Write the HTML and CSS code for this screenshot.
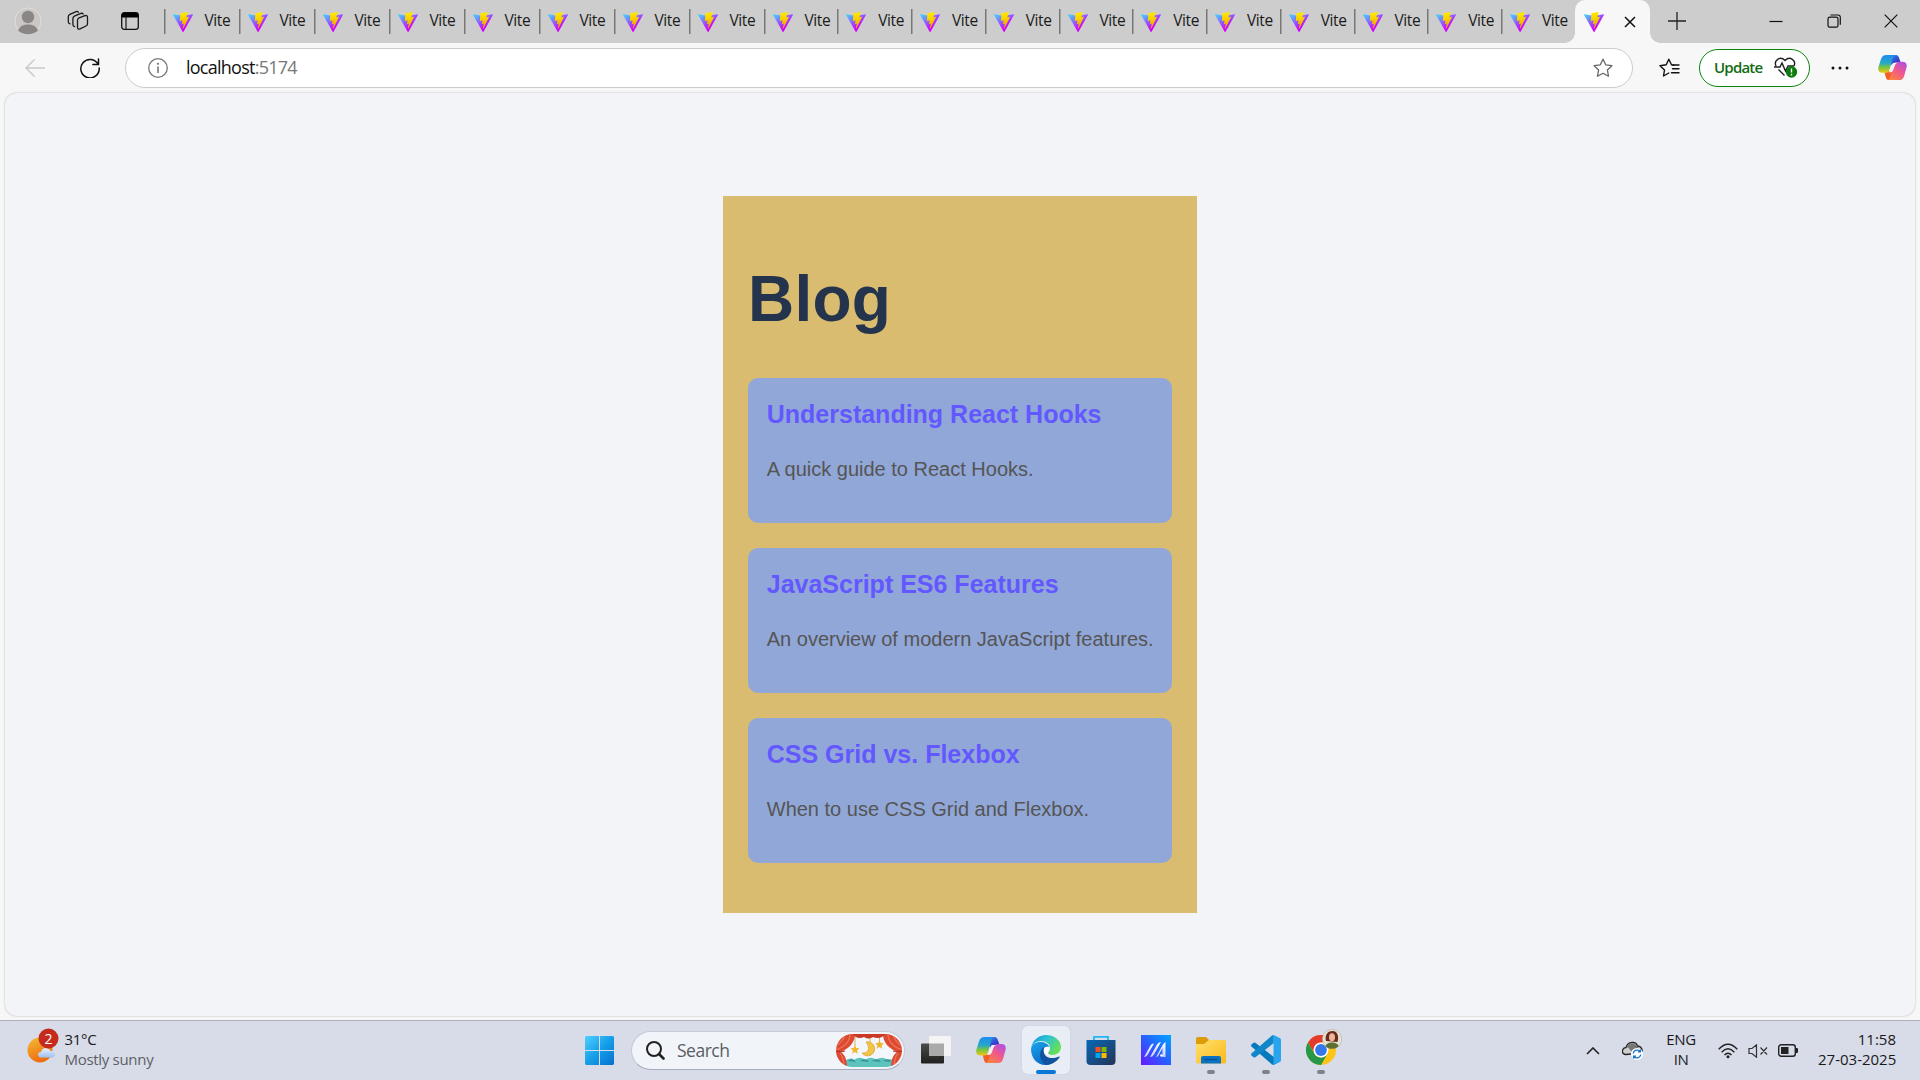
FILE: index.html
```html
<!DOCTYPE html>
<html lang="en">
<head>
<meta charset="utf-8">
<title>Vite</title>
<link rel="stylesheet" href="styles.css">
</head>
<body>
<svg class="defs" width="0" height="0" aria-hidden="true">
  <defs>
    <linearGradient id="v1" x1="0" x2=".576" y1=".077" y2=".784"><stop offset="0" stop-color="#41d1ff"/><stop offset="1" stop-color="#d000ff"/></linearGradient>
    <linearGradient id="v2" x1=".434" x2=".503" y1=".022" y2=".89"><stop offset="0" stop-color="#ffe800"/><stop offset=".4" stop-color="#f8d400"/><stop offset="1" stop-color="#f0a000"/></linearGradient>
    <linearGradient id="c1" x1="0" x2="0" y1="0" y2="1"><stop offset="0" stop-color="#1f8bf0"/><stop offset=".45" stop-color="#25a9c8"/><stop offset=".7" stop-color="#7cc53c"/><stop offset="1" stop-color="#f3c614"/></linearGradient>
    <linearGradient id="c2" x1="1" x2=".2" y1="0" y2="1"><stop offset="0" stop-color="#a64ef0"/><stop offset=".5" stop-color="#f0588c"/><stop offset="1" stop-color="#ff8a30"/></linearGradient>
    <linearGradient id="c3" x1="0" x2="1" y1="0" y2="1"><stop offset="0" stop-color="#3a9df5"/><stop offset="1" stop-color="#3010b8"/></linearGradient>
    <symbol id="vite" viewBox="0 0 256 257">
      <path fill="url(#v1)" d="M255.153 37.938L134.897 252.976c-2.483 4.44-8.862 4.466-11.382.048L.875 37.958c-2.746-4.814 1.371-10.646 6.827-9.67l120.385 21.517a6.537 6.537 0 0 0 2.322-.004l117.867-21.483c5.438-.991 9.574 4.796 6.877 9.62Z"/>
      <path fill="url(#v2)" d="M185.432.063L96.44 17.501a3.268 3.268 0 0 0-2.634 3.014l-5.474 92.456a3.268 3.268 0 0 0 3.997 3.378l24.777-5.718c2.318-.535 4.413 1.507 3.936 3.838l-7.361 36.047c-.495 2.426 1.782 4.5 4.151 3.78l15.304-4.649c2.372-.72 4.652 1.36 4.15 3.788l-11.698 56.621c-.732 3.542 3.979 5.473 5.943 2.437l1.313-2.028l72.516-144.72c1.215-2.423-.88-5.186-3.54-4.672l-25.505 4.922c-2.396.462-4.435-1.77-3.759-4.114l16.646-57.705c.677-2.35-1.37-4.583-3.769-4.113Z"/>
    </symbol>
    <symbol id="copilot" viewBox="0 0 30 28">
      <path fill="url(#c3)" d="M8 1h10c3 0 3.500 2 4.500 5l1 3h-5c-2 0-3 1-4 3z"/>
      <path fill="url(#c2)" d="M22 27H12c-3 0-3.500-2-4.500-5l-1-3h5c2 0 3-1 4-3l2-5c1-2 2-3 4-3h4c3 0 5 2 4 6l-2.500 9c-1 3-2.500 4-5 4z"/>
      <path fill="#f0602a" d="M7 18h5c1.500 0 2.500-.6 3.200-2l-3 9c-.6 1.500-1.600 2-2.700 1.400C8 25.500 7.800 22 7 18z"/>
      <path fill="url(#c1)" d="M9 1h10c-2 0-3 1.500-3.600 3.500L12 16c-.8 2.500-2 3.500-4 3.500H4.500c-3.500 0-5-2.500-4-6l2.500-8C4 2.400 5.600 1 9 1z"/>
      <path fill="#f4f1f8" d="M16.500 9h4c-2 .5-2.700 1.800-3.300 3.500l-1.500 4c-.6 1.700-1.700 2.500-3.200 2.500h-3c2 0 2.700-1 3.300-3l1.500-4.500c.5-1.500 1-2.500 2.200-2.500z"/>
    </symbol>
  </defs>
</svg>

<header class="tabstrip">
  <div class="strip-tools">
    <svg class="avatar" viewBox="0 0 28 28"><circle cx="14" cy="14" r="13" fill="#cac7c4" stroke="#e2dfda"/><circle cx="14" cy="10" r="6.200" fill="#8a8685"/><path d="M4 23.500c2-4.500 5.500-6 10-6s8 1.500 10 6c-5.500 5-14.500 5-20 0z" fill="#8a8685"/></svg>
    <svg class="workspaces" viewBox="0 0 22 22" fill="none" stroke="#1a1a1a" stroke-width="1.300" stroke-linejoin="round" stroke-linecap="round"><path d="M11.500 8.200l6.500-2.600q2.500-.6 2.500 1.800v6.300q0 1.600-1.500 2.300l-6 2.800q-2.500.9-2.500-1.500v-7q0-1.500 1-2.100z"/><path d="M7.500 16.500q-1.600-.4-1.600-2V8.500q0-1.600 1.500-2.300l6.500-2.800q1.700-.5 2.200.7"/><path d="M3 13.800q-1.700-.4-1.700-2V6.600q0-1.600 1.500-2.300l6.400-2.700q1.600-.5 2.200.6"/></svg>
    <svg class="tabactions" viewBox="0 0 18 18"><rect x=".7" y=".7" width="16.600" height="16.600" rx="2.500" fill="none" stroke="#111" stroke-width="1.300"/><path d="M.7 5.600V3.200A2.500 2.500 0 0 1 3.200.7h11.600a2.500 2.500 0 0 1 2.500 2.500v2.400z" fill="#000"/><path d="M5 5v12" stroke="#222" stroke-width="1.300"/></svg>
  </div>
  <nav class="tabs">
    <div class="tab wide"><svg><use href="#vite"/></svg><span>Vite</span></div>
    <div class="tab wide"><svg><use href="#vite"/></svg><span>Vite</span></div>
    <div class="tab wide"><svg><use href="#vite"/></svg><span>Vite</span></div>
    <div class="tab wide"><svg><use href="#vite"/></svg><span>Vite</span></div>
    <div class="tab wide"><svg><use href="#vite"/></svg><span>Vite</span></div>
    <div class="tab wide"><svg><use href="#vite"/></svg><span>Vite</span></div>
    <div class="tab wide"><svg><use href="#vite"/></svg><span>Vite</span></div>
    <div class="tab wide"><svg><use href="#vite"/></svg><span>Vite</span></div>
    <div class="tab"><svg><use href="#vite"/></svg><span>Vite</span></div>
    <div class="tab"><svg><use href="#vite"/></svg><span>Vite</span></div>
    <div class="tab"><svg><use href="#vite"/></svg><span>Vite</span></div>
    <div class="tab"><svg><use href="#vite"/></svg><span>Vite</span></div>
    <div class="tab"><svg><use href="#vite"/></svg><span>Vite</span></div>
    <div class="tab"><svg><use href="#vite"/></svg><span>Vite</span></div>
    <div class="tab"><svg><use href="#vite"/></svg><span>Vite</span></div>
    <div class="tab"><svg><use href="#vite"/></svg><span>Vite</span></div>
    <div class="tab"><svg><use href="#vite"/></svg><span>Vite</span></div>
    <div class="tab"><svg><use href="#vite"/></svg><span>Vite</span></div>
    <div class="tab"><svg><use href="#vite"/></svg><span>Vite</span></div>
    <div class="tab active"><svg><use href="#vite"/></svg><svg class="close" viewBox="0 0 12 12"><path d="M1 1l10 10M11 1L1 11" stroke="#111" stroke-width="1.500"/></svg></div>
  </nav>
  <svg class="newtab" viewBox="0 0 18 18"><path d="M9 0v18M0 9h18" stroke="#222" stroke-width="1.300"/></svg>
  <div class="winctl">
    <svg viewBox="0 0 14 14"><path d="M.5 7.500h13" stroke="#111" stroke-width="1.200"/></svg>
    <svg viewBox="0 0 14 14" fill="none" stroke="#111" stroke-width="1.200"><rect x="1" y="3.200" width="10" height="10" rx="1.800"/><path d="M3.500 1h7.500a2.300 2.300 0 0 1 2.300 2.300v7.500"/></svg>
    <svg viewBox="0 0 14 14"><path d="M.7.700l12.600 12.600M13.300.7L.7 13.300" stroke="#111" stroke-width="1.200"/></svg>
  </div>
</header>

<div class="toolbar">
  <svg class="back" viewBox="0 0 20 18" fill="none" stroke="#c9c9c9" stroke-width="1.400"><path d="M20 9H1M9.500.5L1 9l8.500 8.500"/></svg>
  <svg class="reload" viewBox="0 0 20 20" fill="none" stroke="#111" stroke-width="1.500" stroke-linecap="round"><path d="M18.200 6.500A9.200 9.200 0 1 0 19.200 10M18.500 1v5.600h-5.600"/></svg>
  <div class="address">
    <svg class="info" viewBox="0 0 20 20"><circle cx="10" cy="10" r="9.300" fill="none" stroke="#777" stroke-width="1.300"/><path d="M10 8.500v6.500" stroke="#777" stroke-width="1.600"/><circle cx="10" cy="5.800" r="1.100" fill="#777"/></svg>
    <span class="url">localhost<i>:5174</i></span>
    <svg class="star" viewBox="0 0 20 20"><path d="M10 1.200l2.700 5.600 6.200.9-4.500 4.300 1.100 6.200L10 15.300l-5.500 2.900 1.100-6.200L1.100 7.700l6.200-.9z" fill="none" stroke="#666" stroke-width="1.300" stroke-linejoin="round"/></svg>
  </div>
  <svg class="favs" viewBox="0 0 21 20" fill="none" stroke="#111" stroke-width="1.400" stroke-linejoin="round" stroke-linecap="round"><path d="M9.800 15l-5.300 3 1-6-4.500-4.300 6.200-.9L9.800 1.200l2.700 5.600 2.500.4M13.500 10.800h6.500M12.500 14.800h7.500"/><path d="M14 7h6"/></svg>
  <button class="update">Update
    <svg viewBox="0 0 24 21" fill="none" stroke="#222" stroke-width="1.400"><path d="M2 9C-.5 3.500 6-1.500 11 3.500c5-5 11.500 0 9 5.500M0 10h6l2-4 3.500 8 2.500-5h6M4.500 12.500l6 6"/><circle cx="17.500" cy="15" r="5.700" fill="#0c7d0c" stroke="none"/><path d="M17.500 11.500v4M17.500 16.800v1.600" stroke="#fff"/></svg>
  </button>
  <svg class="more" viewBox="0 0 18 4"><circle cx="2" cy="2" r="1.500"/><circle cx="9" cy="2" r="1.500"/><circle cx="16" cy="2" r="1.500"/></svg>
  <svg class="copilot-btn"><use href="#copilot"/></svg>
</div>

<main class="viewport">
  <section class="blog">
    <h1>Blog</h1>
    <div class="posts">
      <article class="post"><h2>Understanding React Hooks</h2><p>A quick guide to React Hooks.</p></article>
      <article class="post"><h2>JavaScript ES6 Features</h2><p>An overview of modern JavaScript features.</p></article>
      <article class="post"><h2>CSS Grid vs. Flexbox</h2><p>When to use CSS Grid and Flexbox.</p></article>
    </div>
  </section>
</main>

<footer class="taskbar">
  <div class="weather">
    <svg viewBox="0 0 34 36"><defs><linearGradient id="sun" x1="0" x2=".4" y1="0" y2="1"><stop offset="0" stop-color="#f2bd35"/><stop offset="1" stop-color="#f06c10"/></linearGradient><linearGradient id="cl" x1="0" x2="0" y1="0" y2="1"><stop offset="0" stop-color="#e8f1ff"/><stop offset="1" stop-color="#9dbff2"/></linearGradient></defs><circle cx="14" cy="22" r="12.500" fill="url(#sun)"/><path d="M15 29.500c-4 0-4-5.500 0-5.500 1-5 8-5 9.500-1 6-.5 6 6.500 1 6.500z" fill="url(#cl)"/><circle cx="22.500" cy="10.500" r="10" fill="#c42b1c"/><text x="22.500" y="15.500" text-anchor="middle">2</text></svg>
    <div class="lines"><span>31°C</span><span class="dim">Mostly sunny</span></div>
  </div>

  <div class="apps">
    <svg class="start" viewBox="0 0 29 29"><defs><linearGradient id="w" gradientUnits="userSpaceOnUse" x1="0" y1="0" x2="29" y2="29"><stop offset="0" stop-color="#50d0ff"/><stop offset=".5" stop-color="#159ee8"/><stop offset="1" stop-color="#0670cf"/></linearGradient></defs><path fill="url(#w)" d="M1 0h13v14H0V1zM15 0h13l1 1v13H15zM0 15h14v14H1l-1-1zM15 15h14v13l-1 1H15z"/></svg>
    <div class="search">
      <svg class="glass" viewBox="0 0 19 19" fill="none" stroke="#222" stroke-width="2"><circle cx="8" cy="8" r="7"/><path d="M13 13l4.500 4.500" stroke-width="2.600" stroke-linecap="round"/></svg>
      <span>Search</span>
      <svg class="theatre" viewBox="0 0 66 33">
        <defs><clipPath id="pill"><rect width="66" height="33" rx="16.500"/></clipPath></defs>
        <g clip-path="url(#pill)">
          <rect width="66" height="33" fill="#f3f6fb"/>
          <path d="M9 27c4-3 7-3 9-1 4-3 8-3 11 0 4-3 8-3 11 0 4-3 8-3 11 0 2-1 5-1 8 1v7H9z" fill="#5cc4bd"/>
          <path d="M12 27c3-3 6-2 8 1M24 27c4-3 7-2 9 1M36 27c4-3 7-2 9 1M47 27c4-3 7-2 8 1" fill="#38949a"/>
          <path d="M19 3v9M34 2v7M43.500 2v6" stroke="#d6a13a" stroke-width=".8"/>
          <path d="M0 0h19c0 9-6 14-14 18 4 3 6 8 6 15H0zM66 0H47c0 9 6 14 14 18-4 3-6 8-6 15h11z" fill="#dd4a32"/>
          <path d="M14 0c0 8-6 13-14 16M9 0C8 6 5 9 0 12M4 19c3 4 4 8 4 14M52 0c0 8 6 13 14 16M57 0c1 6 4 9 9 12M62 19c-3 4-4 8-4 14" fill="none" stroke="#f0745a" stroke-width="1.200"/>
          <path d="M0 17c3 1 6 1 9 0M66 17c-3 1-6 1-9 0" stroke="#b02c20" fill="none"/>
          <path d="M17 0h32c-2 4-8 5-12 3-3 2-6 2-9 0-4 2-9 1-11-3z" fill="#c93825"/>
          <path d="M30 8a7 7 0 1 1-4 11c6 1 9-5 4-11z" fill="#f3c545" stroke="#d99c28" stroke-width=".7"/>
          <path id="star" d="M19 11l1.300 2.900 3.200.4-2.400 2.200.7 3.200-2.800-1.700-2.800 1.700.7-3.200-2.400-2.200 3.200-.4z" fill="#efb72e"/>
          <use href="#star" x="24.500" y="-5"/>
        </g>
      </svg>
    </div>
    <div class="cell"><svg viewBox="0 0 30 30"><defs><linearGradient id="tv" x1="0" x2="0" y1="0" y2="1"><stop offset="0" stop-color="#4a4a4a"/><stop offset="1" stop-color="#20201e"/></linearGradient></defs><rect y="8.500" width="23" height="20" rx="1" fill="url(#tv)"/><rect x="8" y="1" width="22" height="20" rx="1" fill="#f4f4f4"/><rect x="8" y="8.500" width="15" height="12.500" fill="#aaa"/></svg></div>
    <div class="cell"><svg><use href="#copilot"/></svg></div>
    <div class="cell current"><svg viewBox="0 0 30 30"><defs><linearGradient id="e1" x1="0" x2="1" y1="0" y2=".5"><stop offset="0" stop-color="#1490df"/><stop offset=".5" stop-color="#2bc3d2"/><stop offset="1" stop-color="#67df58"/></linearGradient><linearGradient id="e2" x1="0" x2=".6" y1="0" y2="1"><stop offset="0" stop-color="#1aa5e8"/><stop offset="1" stop-color="#0868c9"/></linearGradient></defs><path fill="url(#e1)" d="M0 14C1 5 8 0 15 0c9 0 15 6 15 12 0 5-4 8-9 8-3 0-4-1-4-2s2-2 2-5c0-4-4-7-9-7S1 9 0 14z"/><path fill="url(#e2)" d="M0 14C1 9 5 7 9 7c5 0 8 2 9.500 5-3-1-7 1-7 6 0 7 6 10 12 9-3 2-6 3-9 3C6 30 0 23 0 14z"/><path fill="#11539e" d="M13 12c-6 4-5 14 2 18 6 0 11-4 13.500-7.500.4-.8-.2-1.200-1-.8-7 3.300-17 1-14.500-9.700z"/><path fill="#fff" opacity=".95" d="M13.500 12.500c2-1.200 4.500-.8 5.200.5.5 2.500-1.900 3.500-1.700 5 .2 1.200 1.600 2 3 2.300-4 .7-8.500-2.300-6.500-7.800z"/></svg></div>
    <div class="cell"><svg viewBox="0 0 30 30"><defs><linearGradient id="s" x1="0" x2="1" y1="0" y2="1"><stop offset="0" stop-color="#0669b5"/><stop offset="1" stop-color="#253357"/></linearGradient></defs><path d="M8 6V1.800h14V6" fill="none" stroke="#22b6f2" stroke-width="1.800"/><path d="M.5 5h29v21a4 4 0 0 1-4 4h-21a4 4 0 0 1-4-4z" fill="url(#s)"/><path fill="#f25022" d="M9.500 12h5v5h-5z"/><path fill="#7fba00" d="M15.500 12h5v5h-5z"/><path fill="#00a4ef" d="M9.500 18h5v5h-5z"/><path fill="#ffb900" d="M15.500 18h5v5h-5z"/></svg></div>
    <div class="cell"><svg viewBox="0 0 30 30"><defs><linearGradient id="a" x1="0" x2="1" y1="1" y2="0"><stop offset="0" stop-color="#6818ff"/><stop offset=".5" stop-color="#2860ff"/><stop offset="1" stop-color="#00a5ff"/></linearGradient><linearGradient id="b" x1="0" x2="0" y1="0" y2="1"><stop offset="0" stop-color="#fff"/><stop offset="1" stop-color="#c5cdff"/></linearGradient></defs><path fill="url(#a)" d="M0 0h30v30H0z"/><path fill="url(#b)" d="M3 22L9.500 10.500Q10.500 8.500 13 8.500L6.500 20Q5.500 22 3 22zM9 22l7-12.500Q17.500 7 20 7L13 19.500Q11.500 22 9 22zM15 22l7-12.500Q23.300 7.500 24.500 7v15h-3v-9l-3 5.500Q17 22 15 22z"/><circle cx="20.500" cy="20.500" r="1.300" fill="#fff"/></svg></div>
    <div class="cell open"><svg viewBox="0 0 30 30"><defs><linearGradient id="f" x1="0" x2="1" y1="0" y2="1"><stop offset="0" stop-color="#ffe070"/><stop offset="1" stop-color="#fbb917"/></linearGradient></defs><path d="M0 4a2 2 0 0 1 2-2h8l3 3v5H0z" fill="#dc9c08"/><path d="M0 9h8l5-4h16l1 1v21l-1 1.500H1L0 27z" fill="url(#f)"/><path d="M5 28.500V23q0-2 2-2h16q2 0 2 2v5.500z" fill="#0872c5"/><path d="M8.500 24.500h13" stroke="#0a4c91" stroke-width="1.200"/></svg></div>
    <div class="cell open"><svg viewBox="0 0 100 100"><path fill="#0879bd" d="M1.500 32l7-6q3-2 6 0L96 88l-21 12-5-2L1.500 38q-3-3 0-6z"/><path fill="#1187c9" d="M1.500 68l7 6q3 2 6 0L76 27V0l-6 2L1.500 62q-3 3 0 6z"/><path fill="#29a5ee" d="M70 2q3-3 7-1.500L96 10q4 2 4 6v68q0 4-4 6l-19 9.500q-4 1.500-7-1.500 5 2 5-4V6q0-6-5-4z"/></svg></div>
    <div class="cell open chrome"><svg viewBox="0 0 30 30"><circle cx="15" cy="15" r="15" fill="#fdc413"/><path d="M2 7.500a15 15 0 0 1 26 0H15a7.500 7.500 0 0 0-6.500 11z" fill="#e33b2e"/><path d="M2 7.500A15 15 0 0 0 15 30l6.500-11.300a7.500 7.500 0 0 1-13 0z" fill="#279847"/><circle cx="15" cy="15" r="7.500" fill="#fff"/><circle cx="15" cy="15" r="5.900" fill="#3478ec"/></svg><svg class="badge" viewBox="0 0 20 20"><circle cx="10" cy="10" r="9.700" fill="#e5e2d0" stroke="#aaa69c" stroke-width=".5"/><path d="M4 12C2.500 7 5 2 10.500 2S17 8 15.500 13z" fill="#6b2a1e"/><ellipse cx="10" cy="8.200" rx="3" ry="4" fill="#eeb699"/><path d="M3.500 17.200c1-5 12-5 13 0-4 3.500-9 3.500-13 0z" fill="#5d7033"/></svg></div>
  </div>

  <div class="tray">
    <svg class="chev" viewBox="0 0 14 8"><path d="M1 7l6-6 6 6" fill="none" stroke="#222" stroke-width="1.600"/></svg>
    <svg class="cloud" viewBox="0 0 21 19"><path d="M4 13.500C-1 13.500-.5 7 4 6.500 6 0 14 0 15.500 5c4 0 5.500 4 4 7z" fill="#cfcfcf" stroke="#222" stroke-width="1.300"/><path d="M4.500 6C7 1 13 1 15 5.500l3 2c-5-1-7 2-9 3C8 8 7 7 4.500 6z" fill="#777"/><circle cx="15" cy="13" r="6" fill="#fff"/><path d="M11.200 12.500a4 4 0 0 1 7-2M18.800 13.500a4 4 0 0 1-7 2M18.400 8.500v2.300H16M11.600 17.500v-2.300H14" fill="none" stroke="#1373cf" stroke-width="1.300"/></svg>
    <div class="lang"><span>ENG</span><span>IN</span></div>
    <svg class="wifi" viewBox="0 0 20 16" fill="none" stroke="#222" stroke-width="1.400"><path d="M.7 6.200q9.300-9.800 18.600 0M3.600 9.200q6.400-6.800 12.800 0M6.500 12q3.500-3.600 7 0"/><circle cx="10" cy="13.800" r="1.500" fill="#222" stroke="none"/></svg>
    <svg class="mute" viewBox="0 0 20 14" fill="none" stroke="#333" stroke-width="1.200"><path d="M1 4.500h3L8.500.8v12.400L4 9.500H1zM12.500 3.500l6.500 7M19 3.500l-6.500 7"/></svg>
    <svg class="battery" viewBox="0 0 20 13"><rect x=".7" y=".7" width="16.600" height="11.600" rx="2.500" fill="none" stroke="#222" stroke-width="1.400"/><rect x="3" y="3" width="7.500" height="7" fill="#222"/><path d="M18 4h1q1 0 1 1v3q0 1-1 1h-1z" fill="#222"/></svg>
    <div class="clock"><span>11:58</span><span>27-03-2025</span></div>
  </div>
</footer>
</body>
</html>
```
FILE: styles.css
```css
* { box-sizing: border-box; }
body { margin: 0; width: 1920px; height: 1080px; overflow: hidden; display: flex; flex-direction: column; background: #f7f7f7; font-family: "Open Sans", "Noto Sans", sans-serif; color: #1a1a1a; }
svg { display: block; flex: none; }
.defs { position: absolute; }

.tabstrip { display: flex; height: 43px; background: #cdcdcd; }
.strip-tools { display: flex; width: 163.500px; flex: none; align-items: center; padding: 0 0 1px 14px; }
.avatar { width: 28px; height: 28px; }
.workspaces { width: 22px; height: 22px; margin-left: 25px; }
.tabactions { width: 18px; height: 18px; margin-left: 32px; }
.tabs { display: flex; width: 1486.500px; flex: none; }
.tab { display: flex; width: 73.750px; flex: none; padding: 12px 0 0 9px; font-size: 15.500px; line-height: 18px; background: linear-gradient(#777, #777) 0 9px / 1.500px 25px no-repeat; }
.tab.wide { width: 75px; }
.tab > svg { width: 20px; height: 20px; }
.tab > span { margin: -1px 0 0 12px; width: 32px; height: 18px; letter-spacing: -.4px; }
.tab.active { position: relative; width: 75px; background: #f7f7f7; border-radius: 10px 10px 0 0; }
.tab.active::before, .tab.active::after { content: ""; position: absolute; bottom: 0; width: 10px; height: 10px; }
.tab.active::before { left: -10px; background: radial-gradient(circle at 0 0, #cdcdcd 9.500px, #f7f7f7 10px); }
.tab.active::after { right: -10px; background: radial-gradient(circle at 100% 0, #cdcdcd 9.500px, #f7f7f7 10px); }
.tab .close { width: 12px; height: 12px; margin: 4px 0 0 20.500px; }
.newtab { width: 18px; height: 18px; margin: 12px 0 0 18px; }
.winctl { display: flex; gap: 43.500px; margin: 14px 0 0 83px; }
.winctl svg { width: 14px; height: 14px; }

.toolbar { display: flex; align-items: center; height: 49px; flex: none; padding-left: 25px; }
.back { width: 20px; height: 18px; }
.reload { width: 20px; height: 20px; margin-left: 35px; }
.address { display: flex; align-items: center; width: 1508px; height: 40px; margin-left: 25px; padding: 0 19px 0 22px; background: #fff; border: 1px solid #ccc; border-radius: 20px; }
.info, .star { width: 20px; height: 20px; }
.url { flex: 1; margin: -2px 0 0 18px; font-size: 18px; letter-spacing: -.75px; color: #111; }
.url i { font-style: normal; color: #777; }
.favs { width: 21px; height: 20px; margin-left: 26px; }
.update { display: flex; align-items: center; justify-content: space-between; width: 111px; height: 38px; margin-left: 19px; padding: 0 11px 1px 14px; background: #fff; border: 1.500px solid #0c850c; border-radius: 19px; font: 600 15px "Open Sans", sans-serif; letter-spacing: -.8px; color: #116b11; }
.update svg { width: 24px; height: 21px; }
.more { width: 18px; height: 4px; margin-left: 21px; fill: #111; }
.copilot-btn { width: 29px; height: 27px; margin-left: 29px; }

.viewport { display: flex; align-items: center; justify-content: center; height: 923px; flex: none; margin: 1px 5px 4px; background: #f3f4f8; border-radius: 12px; box-shadow: 0 0 2px #aaa; }
.blog { width: 474px; height: 717px; padding: 25px; background: #d9bc70; font-family: "Liberation Sans", Arial, sans-serif; }
.blog h1 { margin: 43px 0; font-size: 64px; line-height: 71px; letter-spacing: .2px; color: #25344d; }
.posts { display: grid; gap: 25px; }
.post { height: 145px; padding: 18px 18.750px; background: #91a7d7; border-radius: 10px; }
.post h2 { margin: 0; font-size: 25px; line-height: 36px; color: #6358ff; white-space: nowrap; }
.post p { margin: 22px 0 0; font-size: 20px; line-height: 30px; color: #555; white-space: nowrap; }

.taskbar { position: relative; display: flex; justify-content: space-between; align-items: center; height: 60px; flex: none; background: #d7dce8; border-top: 1px solid #adb1bb; font-size: 15px; }
.weather { display: flex; width: 584.500px; padding-left: 26px; }
.weather > svg { width: 34px; height: 36px; margin-top: -5px; }
.weather text { font-size: 14px; fill: #fff; }
.lines, .lang, .clock { display: flex; flex-direction: column; margin-top: -4px; line-height: 20px; }
.lines { margin-left: 4.500px; letter-spacing: -.3px; }
.dim { color: #5c5f66; }
.apps { display: flex; align-items: center; height: 59px; flex: 1; }
.start { width: 29px; height: 29px; }
.search { display: flex; align-items: center; width: 274px; height: 39px; margin: -1px 3px 0 17.500px; padding: 0 2px 0 14px; background: #f1f4f9; border: 1px solid #c3cad8; border-bottom-color: #a5adbc; border-radius: 20px; }
.glass { width: 19px; height: 19px; }
.search span { flex: 1; margin-left: 12px; font-size: 17.500px; letter-spacing: -.5px; color: #5a5d63; }
.theatre { width: 66px; height: 33px; }
.cell { position: relative; display: flex; align-items: center; justify-content: center; width: 55px; height: 48px; margin-top: -1px; flex: none; }
.cell > svg { width: 30px; height: 30px; }
.cell.current { width: 48px; margin: -1px 3.500px 0; background: #e9edf5; border-radius: 5px; box-shadow: 0 0 1px #aab; }
.current::after, .open::after { content: ""; position: absolute; left: 50%; bottom: 0; width: 8px; height: 4px; margin-left: -4px; border-radius: 2px; background: #7d8189; }
.current::after { width: 20px; margin-left: -10px; background: #0878d4; }
.chrome .badge { position: absolute; left: 29px; top: 3px; width: 20px; height: 20px; }
.tray { display: flex; align-items: center; padding-right: 24px; }
.chev { width: 14px; height: 8px; }
.cloud { width: 21px; height: 19px; margin-left: 22px; }
.lang { width: 36px; margin-left: 20px; text-align: center; letter-spacing: -.4px; }
.wifi { width: 20px; height: 16px; margin-left: 19px; }
.mute { width: 20px; height: 14px; margin-left: 10px; }
.battery { width: 20px; height: 13px; margin-left: 10px; }
.clock { width: 78px; margin-left: 20px; text-align: right; white-space: nowrap; letter-spacing: 0; }
```
